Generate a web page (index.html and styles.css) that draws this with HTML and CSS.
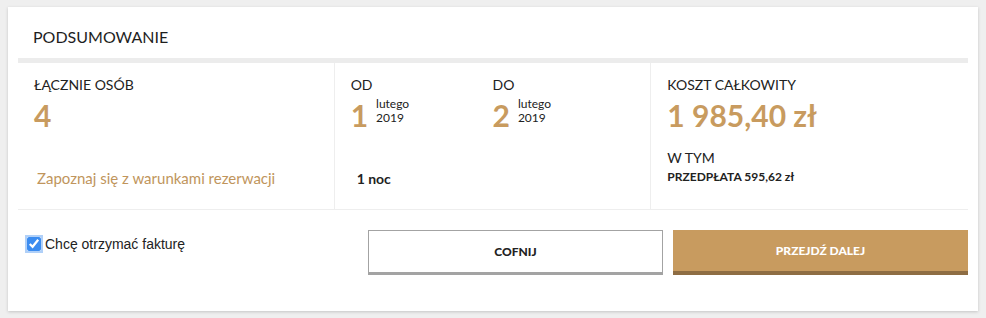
FILE: index.html
```html
<!DOCTYPE html>
<html lang="pl">
<head>
    <meta charset="UTF-8">
    <meta name="viewport" content="width=device-width, initial-scale=1.0">
    <title>Podsumowanie</title>
    <link rel="stylesheet" href="styles.css">
</head>
<body>

    <div class="summary">
        <h2 class="summary-title">PODSUMOWANIE</h2>

        <div class="summary-row">
            <div class="summary-col">
                <div class="label">ŁĄCZNIE OSÓB</div>
                <div class="big">4</div>
                <a class="terms" href="#">Zapoznaj się z warunkami rezerwacji</a>
            </div>

            <div class="summary-col">
                <div class="dates">
                    <div class="date">
                        <div class="label">OD</div>
                        <div class="date-value">
                            <span class="big">1</span>
                            <div class="month">
                                <div>lutego</div>
                                <div>2019</div>
                            </div>
                        </div>
                    </div>
                    <div class="date">
                        <div class="label">DO</div>
                        <div class="date-value">
                            <span class="big">2</span>
                            <div class="month">
                                <div>lutego</div>
                                <div>2019</div>
                            </div>
                        </div>
                    </div>
                </div>
                <div class="nights">1 noc</div>
            </div>

            <div class="summary-col">
                <div class="label">KOSZT CAŁKOWITY</div>
                <div class="big">1 985,40 zł</div>
                <div class="label label-sub">W TYM</div>
                <div class="prepay">PRZEDPŁATA 595,62 zł</div>
            </div>
        </div>

        <div class="summary-actions">
            <label class="invoice">
                <input type="checkbox" checked>
                Chcę otrzymać fakturę
            </label>
            <button class="btn btn-back">COFNIJ</button>
            <button class="btn btn-next">PRZEJDŹ DALEJ</button>
        </div>
    </div>

</body>
</html>
```

FILE: styles.css
```css
body {
    font-family: Lato, "Open Sans", sans-serif;
    background-color: #efefef;
    margin: 0;
    padding: 7px 8px;
    color: #222;
}

.summary {
    width: 970px;
    height: 304px;
    box-sizing: border-box;
    background-color: #fff;
    padding: 0 10px;
    box-shadow: 0 1px 3px rgba(0, 0, 0, 0.18);
}

.summary-title {
    margin: 0;
    height: 56px;
    box-sizing: border-box;
    padding: 20px 15px 0;
    font-size: 16px;
    font-weight: 400;
    line-height: 20px;
    color: #1e1e1e;
    border-bottom: 5px solid #ececec;
}

.summary-row {
    display: grid;
    grid-template-columns: repeat(3, 1fr);
    border-bottom: 1px solid #eee;
}

.summary-col {
    height: 146px;
    box-sizing: border-box;
    padding: 13px 16px 0;
    border-right: 1px solid #eee;
}

.summary-col:last-child {
    border-right: none;
}

.label {
    font-size: 14px;
    line-height: 17px;
    color: #222;
}

.big {
    font-size: 30px;
    font-weight: 700;
    line-height: 36px;
    margin-top: 4px;
    color: #c89b5f;
}

.terms {
    display: block;
    margin-top: 36px;
    margin-left: 3px;
    font-size: 15px;
    line-height: 18px;
    color: #c0955c;
    text-decoration: none;
}

.dates {
    display: grid;
    grid-template-columns: 1fr 1fr;
}

.date-value {
    display: flex;
    align-items: flex-start;
}

.date-value .big {
    margin-right: 8px;
}

.month {
    font-size: 12px;
    line-height: 14px;
    margin-top: 4px;
    color: #222;
}

.nights {
    margin-top: 37px;
    margin-left: 6px;
    font-size: 14px;
    font-weight: 700;
}

.label-sub {
    margin-top: 16px;
}

.prepay {
    margin-top: 3px;
    font-size: 12px;
    font-weight: 700;
}

.summary-actions {
    display: flex;
    align-items: flex-start;
    gap: 10px;
    padding-top: 20px;
}

.invoice {
    flex: 1;
    display: flex;
    align-items: center;
    margin-left: 9px;
    margin-top: 6px;
    font-family: "Liberation Sans", Arial, sans-serif;
    font-size: 14px;
    color: #222;
}

.invoice input {
    margin: 0 4px 0 0;
    width: 14px;
    height: 14px;
    accent-color: #3b8cf0;
    box-shadow: 0 0 0 2px rgba(80, 150, 240, 0.45);
    border-radius: 3px;
}

.btn {
    width: 295px;
    height: 45px;
    font-family: Lato, sans-serif;
    font-size: 12px;
    font-weight: 900;
    cursor: pointer;
}

.btn-back {
    background-color: #fff;
    color: #222;
    border: 1px solid #a3a3a3;
    border-bottom: 3px solid #a3a3a3;
}

.btn-next {
    background-color: #c89b5f;
    color: #fff;
    border: none;
    border-bottom: 4px solid #8e6d43;
}
```
